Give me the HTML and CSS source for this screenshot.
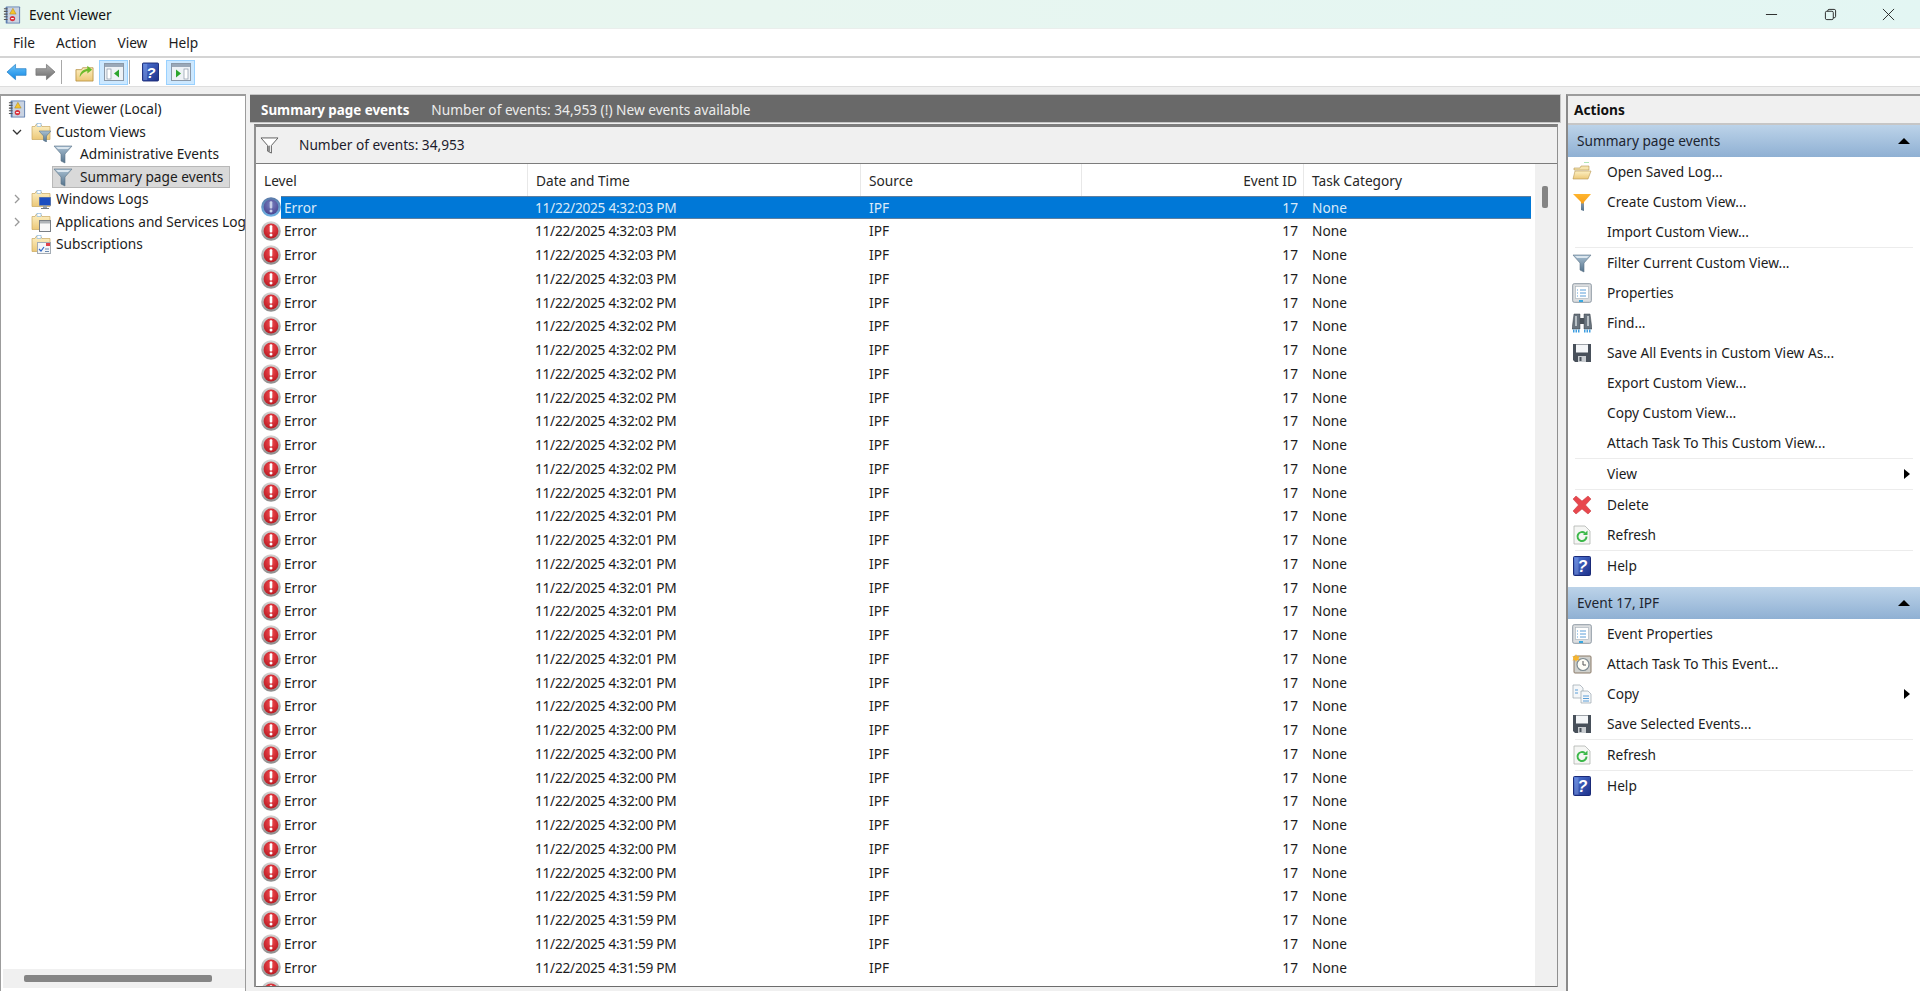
FILE: index.html
```html
<!DOCTYPE html>
<html lang="en">
<head>
<meta charset="utf-8">
<title>Event Viewer</title>
<link rel="stylesheet" href="styles.css">
</head>
<body>
<svg class="defs" aria-hidden="true">
  <defs>
    <radialGradient id="gRed" cx="50%" cy="35%" r="65%"><stop offset="0" stop-color="#f04a50"/><stop offset="1" stop-color="#bb1a22"/></radialGradient>
    <linearGradient id="gRing" x1="0" y1="0" x2="0" y2="1"><stop offset="0" stop-color="#d4d4d4"/><stop offset="1" stop-color="#8c8c8c"/></linearGradient>
    <radialGradient id="gPurple" cx="50%" cy="35%" r="65%"><stop offset="0" stop-color="#7a82c0"/><stop offset="1" stop-color="#4b4590"/></radialGradient>
    <linearGradient id="gRingB" x1="0" y1="0" x2="0" y2="1"><stop offset="0" stop-color="#5a7aa8"/><stop offset="1" stop-color="#6fb2e4"/></linearGradient>
    <linearGradient id="gFold" x1="0" y1="0" x2="0" y2="1"><stop offset="0" stop-color="#fdf0c4"/><stop offset="1" stop-color="#ecc878"/></linearGradient>
    <linearGradient id="gFun" x1="0" y1="0" x2="0" y2="1"><stop offset="0" stop-color="#a9c0d2"/><stop offset="1" stop-color="#55738c"/></linearGradient>
    <linearGradient id="gOrg" x1="0" y1="0" x2="0" y2="1"><stop offset="0" stop-color="#ffb52e"/><stop offset=".5" stop-color="#f8a21c"/><stop offset=".6" stop-color="#7d93a6"/><stop offset="1" stop-color="#55738c"/></linearGradient>
    <linearGradient id="gBlue" x1="0" y1="0" x2="0" y2="1"><stop offset="0" stop-color="#6cc4fa"/><stop offset="1" stop-color="#0f86e4"/></linearGradient>
    <linearGradient id="gGrey" x1="0" y1="0" x2="0" y2="1"><stop offset="0" stop-color="#b0b0b0"/><stop offset="1" stop-color="#6c6c6c"/></linearGradient>
    <linearGradient id="gHelp" x1="0" y1="0" x2="1" y2="1"><stop offset="0" stop-color="#4f78d8"/><stop offset="1" stop-color="#1d2f88"/></linearGradient>
    <symbol id="err" viewBox="0 0 20 20"><circle cx="10" cy="10" r="9.8" fill="url(#gRing)"/><circle cx="10" cy="10" r="7.4" fill="url(#gRed)"/><rect x="8.7" y="4.2" width="2.6" height="7.4" rx="1" fill="#fff"/><circle cx="10" cy="14.1" r="1.5" fill="#fff"/></symbol>
    <symbol id="errsel" viewBox="0 0 20 20"><circle cx="10" cy="10" r="9.8" fill="url(#gRingB)"/><circle cx="10" cy="10" r="7.4" fill="url(#gPurple)"/><rect x="8.7" y="4.2" width="2.6" height="7.4" rx="1" fill="#c8cfe8"/><circle cx="10" cy="14.1" r="1.5" fill="#c8cfe8"/></symbol>
    <symbol id="book" viewBox="0 0 20 20"><rect x="3" y="0.500" width="16" height="19" rx="1" fill="#5f7fb0"/><rect x="5" y="1.500" width="13" height="17" fill="#c9d3e2"/><path d="M1 3h4M1 6h4M1 9h4M1 12h4M1 15h4" stroke="#555" stroke-width="1.200"/><path d="M11 2.500l3.600 6.500H7.400z" fill="#f4c430" stroke="#a57a10" stroke-width=".5"/><circle cx="10.500" cy="14" r="3" fill="#d8323c"/><rect x="9" y="13.400" width="3" height="1.200" fill="#fff"/></symbol>
    <symbol id="back" viewBox="0 0 22 18"><path d="M1 9 10 1v4.500h11v7H10V17z" fill="url(#gBlue)" stroke="#2f86c9" stroke-width=".8"/></symbol>
    <symbol id="fwd" viewBox="0 0 22 18"><path d="M21 9 12 1v4.500H1v7h11V17z" fill="url(#gGrey)" stroke="#777" stroke-width=".8"/></symbol>
    <symbol id="folderup" viewBox="0 0 20 20"><path d="M1 7h6l1-2h11v14H1z" fill="url(#gFold)" stroke="#b48b36" stroke-width=".8"/><path d="M5 15c0-5 3-8 8-9V3l5 4-5 4V8.500c-3 .5-6 3-8 6.500z" fill="#6cbb2c"/></symbol>
    <symbol id="panelleft" viewBox="0 0 20 18"><rect x=".5" y=".5" width="19" height="17" fill="#eef2f6" stroke="#8a98a8"/><rect x="1" y="1" width="18" height="3" fill="#9aa8b8"/><rect x="3" y="6" width="4" height="10" fill="#fff" stroke="#8a98a8" stroke-width=".7"/><path d="M15 6.500v8l-5-4z" fill="#2da52d"/></symbol>
    <symbol id="panelright" viewBox="0 0 20 18"><rect x=".5" y=".5" width="19" height="17" fill="#eef2f6" stroke="#8a98a8"/><rect x="1" y="1" width="18" height="3" fill="#9aa8b8"/><rect x="13" y="6" width="4" height="10" fill="#fff" stroke="#8a98a8" stroke-width=".7"/><path d="M5 6.500v8l5-4z" fill="#2da52d"/></symbol>
    <symbol id="help" viewBox="0 0 18 20"><rect x=".5" y=".5" width="17" height="19" rx="1" fill="url(#gHelp)" stroke="#1a2a78"/><rect x="1.500" y="1.500" width="4" height="17" fill="#9fb8f0" opacity=".35"/><text x="9.500" y="16" text-anchor="middle" class="qm">?</text></symbol>
    <symbol id="folder" viewBox="0 0 20 20"><path d="M1 4.500h3l1-2h5l1 2h8v13H1z" fill="url(#gFold)" stroke="#c8a860" stroke-width=".7"/><rect x="6" y="1.500" width="4" height="3" fill="#fff" stroke="#7fb0d8" stroke-width=".6"/></symbol>
    <symbol id="funnel" viewBox="0 0 20 20"><path d="M1 2h18l-7 8v9l-4-2v-7z" fill="url(#gFun)" stroke="#5c7486" stroke-width=".6"/><path d="M3 3h14l-2 2H5z" fill="#dbe6ee"/></symbol>
    <symbol id="funnelorg" viewBox="0 0 20 20"><path d="M1 2h18l-7 8v9l-3-1v-8z" fill="url(#gOrg)"/></symbol>
    <symbol id="funnelline" viewBox="0 0 20 18"><path d="M1 1h18l-7 8v8l-4-2V9z" fill="#fff" stroke="#5a5a5a"/><path d="M8.500 9.500v5.500l2 1V9z" fill="#8a8a8a"/></symbol>
    <symbol id="open" viewBox="0 0 20 20"><path d="M2 6h6l1-2h8v4H2z" fill="#f6e5ae" stroke="#b69650" stroke-width=".6"/><path d="M1 17 3 9h16l-3 8z" fill="url(#gFold)" stroke="#b69650" stroke-width=".6"/><path d="M12 0h5" stroke="#39c04a" stroke-width=".8"/></symbol>
    <symbol id="props" viewBox="0 0 20 20"><rect x=".7" y=".7" width="18.600" height="18.600" rx="1.500" fill="#dcdee0" stroke="#8f9aa4"/><rect x="3.500" y="3.500" width="13" height="12" fill="#fff" stroke="#a6b0b8" stroke-width=".6"/><path d="M5 7h1M8 7h6M5 10h1M8 10h6M5 13h1M8 13h6" stroke="#5a9ed8"/><rect x="7" y="17" width="4" height="2" fill="#38a8e0"/></symbol>
    <symbol id="binoc" viewBox="0 0 20 20"><path d="M2 1h6v15H0z" fill="#6a747e" stroke="#3a424a" stroke-width=".5"/><path d="M12 1h6l2 15h-8z" fill="#6a747e" stroke="#3a424a" stroke-width=".5"/><rect x="8" y="5" width="4" height="6" fill="#4a525a"/><path d="M4 3v10M16 3v10" stroke="#d4dade" stroke-width="1.500"/><path d="M1 18h7M12 18h7" stroke="#3d9de0" stroke-width="3" stroke-dasharray="1.500 1"/></symbol>
    <symbol id="save" viewBox="0 0 20 20"><path d="M1 1h18v18H3l-2-2z" fill="#48505a"/><rect x="4" y="1.500" width="12" height="8" fill="#f4f6f8"/><rect x="6" y="13" width="8" height="6" fill="#c8ccd0"/><rect x="7.500" y="14" width="2" height="4" fill="#48505a"/></symbol>
    <symbol id="del" viewBox="0 0 20 20"><path d="M1 4 4 1l6 5 6-5 3 3-5.500 6L19 16l-3 3-6-5-6 5-3-3 5.500-6z" fill="#e8474d" stroke="#c2343a" stroke-width=".5"/></symbol>
    <symbol id="refresh" viewBox="0 0 18 20"><path d="M1 1h11l5 5v13H1z" fill="#f5f6f4" stroke="#b0b4b0" stroke-width=".8"/><path d="M13.500 11.500a4.500 4.500 0 1 1-1.500-3.300" fill="none" stroke="#3cb84a" stroke-width="2"/><path d="M14.500 5.500v4.500h-4.500z" fill="#3cb84a"/></symbol>
    <symbol id="task" viewBox="0 0 20 20"><rect x="2" y="2" width="17" height="17" rx="1" fill="#cfd0cc" stroke="#8b7a68"/><circle cx="11" cy="10.500" r="6" fill="#fdfdf6" stroke="#7d8a92" stroke-width="1.200"/><path d="M11 7v4h3" fill="none" stroke="#555" stroke-width="1"/><path d="M4 0l1 2.500 2.500-.5-1 2.500 1 2L5 6 4 8 3 6 .5 6.500l1-2-1-2.500 2.500.5z" fill="#f7b52c"/></symbol>
    <symbol id="copy" viewBox="0 0 20 20"><path d="M1 1h7l3 3v10H1z" fill="#f5f7f9" stroke="#9aa4ae" stroke-width=".7"/><path d="M9 7h7l3 3v9H9z" fill="#f5f7f9" stroke="#9aa4ae" stroke-width=".7"/><path d="M3 6h3M3 9h3M11 12h6M11 14.500h6M11 17h6" stroke="#5a9ed8"/></symbol>
    <symbol id="ovfunnel" viewBox="0 0 12 12"><path d="M0 1h12L7.500 6v6l-3-1.500V6z" fill="url(#gFun)" stroke="#4e6a80" stroke-width=".5"/></symbol>
    <symbol id="ovmon" viewBox="0 0 12 12"><rect x="0" y="0" width="12" height="8.500" fill="#1c4fc0" stroke="#8a94a0"/><rect x="4" y="9" width="4" height="2" fill="#9aa2aa"/><rect x="2" y="11" width="8" height="1" fill="#70787f"/></symbol>
    <symbol id="ovwin" viewBox="0 0 12 12"><rect x=".5" y=".5" width="11" height="11" fill="#f8f8f8" stroke="#7a7f85"/><rect x="1" y="1" width="10" height="2.500" fill="#b0b4b8"/></symbol>
    <symbol id="ovsub" viewBox="0 0 14 12"><rect x=".5" y=".5" width="13" height="11" fill="#f4f6f8" stroke="#a4acb4"/><path d="M2 7l2 2 3-4" fill="none" stroke="#3068c8" stroke-width="1.200"/><rect x="9" y="1" width="4" height="3" fill="#e0404a"/><path d="M8 7h4M8 9.500h4" stroke="#6c8ab0"/></symbol>
  </defs>
</svg>

<header class="titlebar">
  <svg class="ico18"><use href="#book"/></svg>
  <span class="apptitle">Event Viewer</span>
  <div class="winctl">
    <svg class="ctl" viewBox="0 0 14 14"><path d="M1 7h12" stroke="#222" stroke-width="1" fill="none"/></svg>
    <svg class="ctl" viewBox="0 0 14 14"><rect x="1.500" y="3.500" width="8.500" height="9" rx="1.500" fill="none" stroke="#222"/><path d="M4 3.500V3c0-1 .6-1.500 1.500-1.500h5.500c1 0 1.500.6 1.500 1.500v6c0 .8-.5 1.500-1.500 1.500H10" fill="none" stroke="#222"/></svg>
    <svg class="ctl" viewBox="0 0 14 14"><path d="M1 1l12 12M13 1 1 13" stroke="#222" stroke-width="1" fill="none"/></svg>
  </div>
</header>
<nav class="menubar"><span>File</span><span>Action</span><span>View</span><span>Help</span></nav>
<div class="toolbar">
  <svg class="tb-arrow"><use href="#back"/></svg>
  <svg class="tb-arrow"><use href="#fwd"/></svg>
  <i class="tb-sep"></i>
  <svg class="tb-folder"><use href="#folderup"/></svg>
  <span class="tb-toggle"><svg class="tb-panel"><use href="#panelleft"/></svg></span>
  <i class="tb-sep tb-sep2"></i>
  <svg class="tb-help"><use href="#help"/></svg>
  <span class="tb-toggle tb-toggle2"><svg class="tb-panel"><use href="#panelright"/></svg></span>
</div>

<main class="workspace">
  <aside class="tree">
    <div class="tree-scroll">
      <div class="node"><svg class="ico18"><use href="#book"/></svg><span>Event Viewer (Local)</span></div>
      <div class="node l1"><svg class="chev" viewBox="0 0 10 10"><path d="M1 3l4 4 4-4" fill="none" stroke="#333" stroke-width="1.300"/></svg><span class="fold"><svg class="ico20"><use href="#folder"/></svg><svg class="ov"><use href="#ovfunnel"/></svg></span><span>Custom Views</span></div>
      <div class="node l2"><svg class="ico20"><use href="#funnel"/></svg><span>Administrative Events</span></div>
      <div class="node l2 picked"><svg class="ico20"><use href="#funnel"/></svg><span>Summary page events</span></div>
      <div class="node l1"><svg class="chev" viewBox="0 0 10 10"><path d="M3 1l4 4-4 4" fill="none" stroke="#999" stroke-width="1.300"/></svg><span class="fold"><svg class="ico20"><use href="#folder"/></svg><svg class="ov"><use href="#ovmon"/></svg></span><span>Windows Logs</span></div>
      <div class="node l1"><svg class="chev" viewBox="0 0 10 10"><path d="M3 1l4 4-4 4" fill="none" stroke="#999" stroke-width="1.300"/></svg><span class="fold"><svg class="ico20"><use href="#folder"/></svg><svg class="ov"><use href="#ovwin"/></svg></span><span>Applications and Services Logs</span></div>
      <div class="node l1 nochev"><span class="fold"><svg class="ico20"><use href="#folder"/></svg><svg class="ov ovw"><use href="#ovsub"/></svg></span><span>Subscriptions</span></div>
    </div>
    <div class="hscroll"><i></i></div>
  </aside>

  <section class="center">
    <div class="band"><b>Summary page events</b><span>Number of events: 34,953 (!) New events available</span></div>
    <div class="frame">
      <div class="countbar"><svg class="ico-count"><use href="#funnelline"/></svg><span>Number of events: 34,953</span></div>
      <div class="listbox">
        <div class="list">
          <div class="row head"><div class="hc">Level</div><div class="hc">Date and Time</div><div class="hc">Source</div><div class="hc id">Event ID</div><div class="hc">Task Category</div></div>
          <div class="rows">
<div class="row sel"><div class="lvl"><svg class="ico20"><use href="#errsel"/></svg><span>Error</span></div><div>11/22/2025 4:32:03 PM</div><div>IPF</div><div class="id">17</div><div>None</div></div>
<div class="row"><div class="lvl"><svg class="ico20"><use href="#err"/></svg><span>Error</span></div><div>11/22/2025 4:32:03 PM</div><div>IPF</div><div class="id">17</div><div>None</div></div>
<div class="row"><div class="lvl"><svg class="ico20"><use href="#err"/></svg><span>Error</span></div><div>11/22/2025 4:32:03 PM</div><div>IPF</div><div class="id">17</div><div>None</div></div>
<div class="row"><div class="lvl"><svg class="ico20"><use href="#err"/></svg><span>Error</span></div><div>11/22/2025 4:32:03 PM</div><div>IPF</div><div class="id">17</div><div>None</div></div>
<div class="row"><div class="lvl"><svg class="ico20"><use href="#err"/></svg><span>Error</span></div><div>11/22/2025 4:32:02 PM</div><div>IPF</div><div class="id">17</div><div>None</div></div>
<div class="row"><div class="lvl"><svg class="ico20"><use href="#err"/></svg><span>Error</span></div><div>11/22/2025 4:32:02 PM</div><div>IPF</div><div class="id">17</div><div>None</div></div>
<div class="row"><div class="lvl"><svg class="ico20"><use href="#err"/></svg><span>Error</span></div><div>11/22/2025 4:32:02 PM</div><div>IPF</div><div class="id">17</div><div>None</div></div>
<div class="row"><div class="lvl"><svg class="ico20"><use href="#err"/></svg><span>Error</span></div><div>11/22/2025 4:32:02 PM</div><div>IPF</div><div class="id">17</div><div>None</div></div>
<div class="row"><div class="lvl"><svg class="ico20"><use href="#err"/></svg><span>Error</span></div><div>11/22/2025 4:32:02 PM</div><div>IPF</div><div class="id">17</div><div>None</div></div>
<div class="row"><div class="lvl"><svg class="ico20"><use href="#err"/></svg><span>Error</span></div><div>11/22/2025 4:32:02 PM</div><div>IPF</div><div class="id">17</div><div>None</div></div>
<div class="row"><div class="lvl"><svg class="ico20"><use href="#err"/></svg><span>Error</span></div><div>11/22/2025 4:32:02 PM</div><div>IPF</div><div class="id">17</div><div>None</div></div>
<div class="row"><div class="lvl"><svg class="ico20"><use href="#err"/></svg><span>Error</span></div><div>11/22/2025 4:32:02 PM</div><div>IPF</div><div class="id">17</div><div>None</div></div>
<div class="row"><div class="lvl"><svg class="ico20"><use href="#err"/></svg><span>Error</span></div><div>11/22/2025 4:32:01 PM</div><div>IPF</div><div class="id">17</div><div>None</div></div>
<div class="row"><div class="lvl"><svg class="ico20"><use href="#err"/></svg><span>Error</span></div><div>11/22/2025 4:32:01 PM</div><div>IPF</div><div class="id">17</div><div>None</div></div>
<div class="row"><div class="lvl"><svg class="ico20"><use href="#err"/></svg><span>Error</span></div><div>11/22/2025 4:32:01 PM</div><div>IPF</div><div class="id">17</div><div>None</div></div>
<div class="row"><div class="lvl"><svg class="ico20"><use href="#err"/></svg><span>Error</span></div><div>11/22/2025 4:32:01 PM</div><div>IPF</div><div class="id">17</div><div>None</div></div>
<div class="row"><div class="lvl"><svg class="ico20"><use href="#err"/></svg><span>Error</span></div><div>11/22/2025 4:32:01 PM</div><div>IPF</div><div class="id">17</div><div>None</div></div>
<div class="row"><div class="lvl"><svg class="ico20"><use href="#err"/></svg><span>Error</span></div><div>11/22/2025 4:32:01 PM</div><div>IPF</div><div class="id">17</div><div>None</div></div>
<div class="row"><div class="lvl"><svg class="ico20"><use href="#err"/></svg><span>Error</span></div><div>11/22/2025 4:32:01 PM</div><div>IPF</div><div class="id">17</div><div>None</div></div>
<div class="row"><div class="lvl"><svg class="ico20"><use href="#err"/></svg><span>Error</span></div><div>11/22/2025 4:32:01 PM</div><div>IPF</div><div class="id">17</div><div>None</div></div>
<div class="row"><div class="lvl"><svg class="ico20"><use href="#err"/></svg><span>Error</span></div><div>11/22/2025 4:32:01 PM</div><div>IPF</div><div class="id">17</div><div>None</div></div>
<div class="row"><div class="lvl"><svg class="ico20"><use href="#err"/></svg><span>Error</span></div><div>11/22/2025 4:32:00 PM</div><div>IPF</div><div class="id">17</div><div>None</div></div>
<div class="row"><div class="lvl"><svg class="ico20"><use href="#err"/></svg><span>Error</span></div><div>11/22/2025 4:32:00 PM</div><div>IPF</div><div class="id">17</div><div>None</div></div>
<div class="row"><div class="lvl"><svg class="ico20"><use href="#err"/></svg><span>Error</span></div><div>11/22/2025 4:32:00 PM</div><div>IPF</div><div class="id">17</div><div>None</div></div>
<div class="row"><div class="lvl"><svg class="ico20"><use href="#err"/></svg><span>Error</span></div><div>11/22/2025 4:32:00 PM</div><div>IPF</div><div class="id">17</div><div>None</div></div>
<div class="row"><div class="lvl"><svg class="ico20"><use href="#err"/></svg><span>Error</span></div><div>11/22/2025 4:32:00 PM</div><div>IPF</div><div class="id">17</div><div>None</div></div>
<div class="row"><div class="lvl"><svg class="ico20"><use href="#err"/></svg><span>Error</span></div><div>11/22/2025 4:32:00 PM</div><div>IPF</div><div class="id">17</div><div>None</div></div>
<div class="row"><div class="lvl"><svg class="ico20"><use href="#err"/></svg><span>Error</span></div><div>11/22/2025 4:32:00 PM</div><div>IPF</div><div class="id">17</div><div>None</div></div>
<div class="row"><div class="lvl"><svg class="ico20"><use href="#err"/></svg><span>Error</span></div><div>11/22/2025 4:32:00 PM</div><div>IPF</div><div class="id">17</div><div>None</div></div>
<div class="row"><div class="lvl"><svg class="ico20"><use href="#err"/></svg><span>Error</span></div><div>11/22/2025 4:31:59 PM</div><div>IPF</div><div class="id">17</div><div>None</div></div>
<div class="row"><div class="lvl"><svg class="ico20"><use href="#err"/></svg><span>Error</span></div><div>11/22/2025 4:31:59 PM</div><div>IPF</div><div class="id">17</div><div>None</div></div>
<div class="row"><div class="lvl"><svg class="ico20"><use href="#err"/></svg><span>Error</span></div><div>11/22/2025 4:31:59 PM</div><div>IPF</div><div class="id">17</div><div>None</div></div>
<div class="row"><div class="lvl"><svg class="ico20"><use href="#err"/></svg><span>Error</span></div><div>11/22/2025 4:31:59 PM</div><div>IPF</div><div class="id">17</div><div>None</div></div>
<div class="row"><div class="lvl"><svg class="ico20"><use href="#err"/></svg><span>Error</span></div><div>11/22/2025 4:31:59 PM</div><div>IPF</div><div class="id">17</div><div>None</div></div>
          </div>
        </div>
        <div class="vscroll"><i></i></div>
      </div>
    </div>
  </section>

  <aside class="actions">
    <div class="act-title">Actions</div>
    <div class="act-head"><span>Summary page events</span><i class="up"></i></div>
    <div class="act"><svg class="ico20"><use href="#open"/></svg><span>Open Saved Log...</span></div>
    <div class="act"><svg class="ico20"><use href="#funnelorg"/></svg><span>Create Custom View...</span></div>
    <div class="act"><i class="ico20"></i><span>Import Custom View...</span></div>
    <div class="act-sep"></div>
    <div class="act"><svg class="ico20"><use href="#funnel"/></svg><span>Filter Current Custom View...</span></div>
    <div class="act"><svg class="ico20"><use href="#props"/></svg><span>Properties</span></div>
    <div class="act"><svg class="ico20"><use href="#binoc"/></svg><span>Find...</span></div>
    <div class="act"><svg class="ico20"><use href="#save"/></svg><span>Save All Events in Custom View As...</span></div>
    <div class="act"><i class="ico20"></i><span>Export Custom View...</span></div>
    <div class="act"><i class="ico20"></i><span>Copy Custom View...</span></div>
    <div class="act"><i class="ico20"></i><span>Attach Task To This Custom View...</span></div>
    <div class="act-sep"></div>
    <div class="act"><i class="ico20"></i><span>View</span><i class="more"></i></div>
    <div class="act-sep"></div>
    <div class="act"><svg class="ico20"><use href="#del"/></svg><span>Delete</span></div>
    <div class="act"><svg class="ico20"><use href="#refresh"/></svg><span>Refresh</span></div>
    <div class="act-sep"></div>
    <div class="act"><svg class="ico20"><use href="#help"/></svg><span>Help</span></div>
    <div class="act-head second"><span>Event 17, IPF</span><i class="up"></i></div>
    <div class="act"><svg class="ico20"><use href="#props"/></svg><span>Event Properties</span></div>
    <div class="act"><svg class="ico20"><use href="#task"/></svg><span>Attach Task To This Event...</span></div>
    <div class="act"><svg class="ico20"><use href="#copy"/></svg><span>Copy</span><i class="more"></i></div>
    <div class="act"><svg class="ico20"><use href="#save"/></svg><span>Save Selected Events...</span></div>
    <div class="act-sep"></div>
    <div class="act"><svg class="ico20"><use href="#refresh"/></svg><span>Refresh</span></div>
    <div class="act-sep"></div>
    <div class="act"><svg class="ico20"><use href="#help"/></svg><span>Help</span></div>
  </aside>
</main>
</body>
</html>
```

FILE: styles.css
```css
* { box-sizing: border-box; }
html, body { margin: 0; height: 991px; overflow: hidden; }
body {
  display: flex; flex-direction: column;
  background: #f0f0f0; color: #1c1c1c;
  font: 13.7px/20px "Noto Sans", "Open Sans", sans-serif;
}
.defs { display: block; width: 0; height: 0; overflow: hidden; flex: none; }
.qm { font: bold italic 16px "Liberation Sans", sans-serif; fill: #fff; }
svg { flex: none; display: block; }

.titlebar {
  height: 29px; flex: none; display: flex; align-items: center; padding: 1px 0 0 3px; gap: 8px;
  background: linear-gradient(90deg, #e8f6ee 0%, #e8f6f0 40%, #e3f6f3 100%);
  border-bottom: 1px solid #eaeeec;
}
.ico18 { width: 18px; height: 18px; }
.ico20 { width: 20px; height: 20px; display: block; flex: none; }
.apptitle { color: #111; }
.winctl { margin-left: auto; display: flex; gap: 45.5px; padding-right: 25px; }
.ctl { width: 13px; height: 13px; }

.menubar {
  height: 29px; flex: none; display: flex; align-items: center; gap: 21px; padding: 1px 0 0 13px;
  background: #fff; border-bottom: 2px solid #d4d4d4;
}
.toolbar {
  height: 29px; flex: none; display: flex; align-items: center; padding-left: 6px;
  background: #fff; border-bottom: 1px solid #dedede;
}
.tb-arrow { width: 21px; height: 18px; margin-right: 8px; }
.tb-arrow + .tb-arrow { margin-right: 5px; }
.tb-sep { width: 1px; height: 24px; background: #a8a8a8; margin: 0 13px 0 0; }
.tb-folder { width: 19px; height: 19px; margin-right: 5px; }
.tb-toggle {
  width: 29px; height: 25px; display: flex; align-items: center; justify-content: center;
  background: #cce8ff; border: 1px solid #99d1ff;
}
.tb-sep2 { margin-left: 1px; margin-right: 12px; }
.tb-help { width: 17px; height: 20px; margin-right: 7px; }
.tb-panel { width: 20px; height: 18px; }

.workspace { flex: 1; min-height: 0; display: flex; padding-top: 7px; }

.tree {
  width: 246px; flex: none; display: flex; flex-direction: column; background: #fff;
  border: 1px solid #9c9c9c; border-top-width: 2px; border-bottom: 0; overflow: hidden; height: 897px;
}
.tree-scroll { flex: 1; padding: 2px 0 0 7px; min-height: 0; }
.node { height: 22.5px; display: flex; align-items: center; gap: 8px; white-space: nowrap; }
.node.l1 { padding-left: 4px; gap: 0; }
.node.l1.nochev { padding-left: 23px; }
.chev { width: 10px; height: 10px; margin-right: 9px; }
.fold { position: relative; width: 20px; height: 20px; margin-right: 5px; flex: none; }
.ov { position: absolute; width: 12px; height: 12px; right: 0; bottom: 0; }
.ovw { width: 14px; }
.node.l2 { margin-left: 44px; padding-left: 0; gap: 7px; width: 178px; border: 1px solid transparent; }
.node.picked { background: #d9d9d9; border-color: #b8b8b8; }
.hscroll { height: 19px; flex: none; background: #f0f0f0; margin: 0 0 3px 2px; display: flex; align-items: center; padding-left: 21px; }
.hscroll i { display: block; width: 188px; height: 7px; border-radius: 2px; background: #858585; }

.center { width: 1311px; flex: none; margin-left: 4px; display: flex; flex-direction: column; height: 897px; }
.band {
  height: 29px; flex: none; display: flex; align-items: center; gap: 22px; padding: 2px 0 0 11px;
  background: #696969; color: #ececec; border: 1px solid #c6c6c6; border-width: 1px 1px 1px 0;
}
.band b { color: #fff; font-weight: 700; font-size: 13.4px; }
.frame {
  flex: 1; min-height: 0; margin: 1px 3px 4px 4px; display: flex; flex-direction: column;
  border: 1px solid #909090; border-top: 3px solid #7d7d7d; border-left-width: 2px; border-right-width: 1px;
  border-bottom: 0;
}
.countbar { height: 36px; flex: none; display: flex; align-items: center; padding-left: 4px; color: #1c1c2c; }
.ico-count { width: 19px; height: 17px; margin-right: 20px; }
.listbox { flex: 1; min-height: 0; display: flex; background: #fff; border-top: 1px solid #7c7c7c; border-bottom: 1px solid #6c6c6c; }
.list { width: 1275px; flex: none; display: flex; flex-direction: column; overflow: hidden; }
.row {
  display: grid; grid-template-columns: 272px 333px 221px 222px 227px;
  height: 23.75px; line-height: 23.75px; white-space: nowrap; flex: none;
}
.row > div { padding-left: 8px; }
.rows .row > div:nth-child(2) { letter-spacing: -0.27px; padding-left: 7px; }
.row > .id { text-align: right; padding: 0 6px 0 0; }
.head { height: 31.5px; line-height: 33.5px; color: #262626; }
.head .hc { border-right: 1px solid #e8e8e8; }
.head .hc:last-child { border-right: 0; }
.rows { flex: 1; min-height: 0; overflow: hidden; }
.row > .lvl { padding-left: 5px; display: flex; align-items: center; }
.lvl span { flex: 1; padding-left: 3px; align-self: stretch; }
.sel { color: #dbeaf8; }
.sel > div:not(.lvl), .sel .lvl span { background: #0078d7; box-shadow: inset 0 1px #607f9f, inset 0 -1px #607f9f; }
.vscroll { flex: 1; background: #f0f0f0; margin-left: 4px; padding: 22px 0 0 7px; }
.vscroll i { display: block; width: 6px; height: 22px; background: #858585; border-radius: 2px; }

.actions {
  flex: 1; margin-left: 5px; display: flex; flex-direction: column; background: #fff;
  border-left: 2px solid #8a8a8a; border-top: 2px solid #9c9c9c; height: 897px; min-width: 0;
}
.act-title { height: 29px; flex: none; background: #f0f0f0; padding-left: 6px; font-weight: 700; color: #111; line-height: 28px; border-bottom: 2px solid #c6c6c6; }
.act-head {
  height: 32px; flex: none; display: flex; align-items: center; padding: 0 10px 0 9px;
  background: linear-gradient(#bcd3e9, #8fb0d3); color: #1c2430;
}
.act-head.second { margin-top: 6px; }
.up { margin-left: auto; width: 0; height: 0; border: 6px solid transparent; border-top: 0; border-bottom: 6px solid #000; }
.act { height: 30px; flex: none; display: flex; align-items: center; padding-left: 4px; gap: 15px; }
.more { margin-left: auto; margin-right: 10px; width: 0; height: 0; border: 5.5px solid transparent; border-right: 0; border-left: 6px solid #000; }
.act-sep { height: 1px; flex: none; background: #ececec; margin: 0 7px; }
```
